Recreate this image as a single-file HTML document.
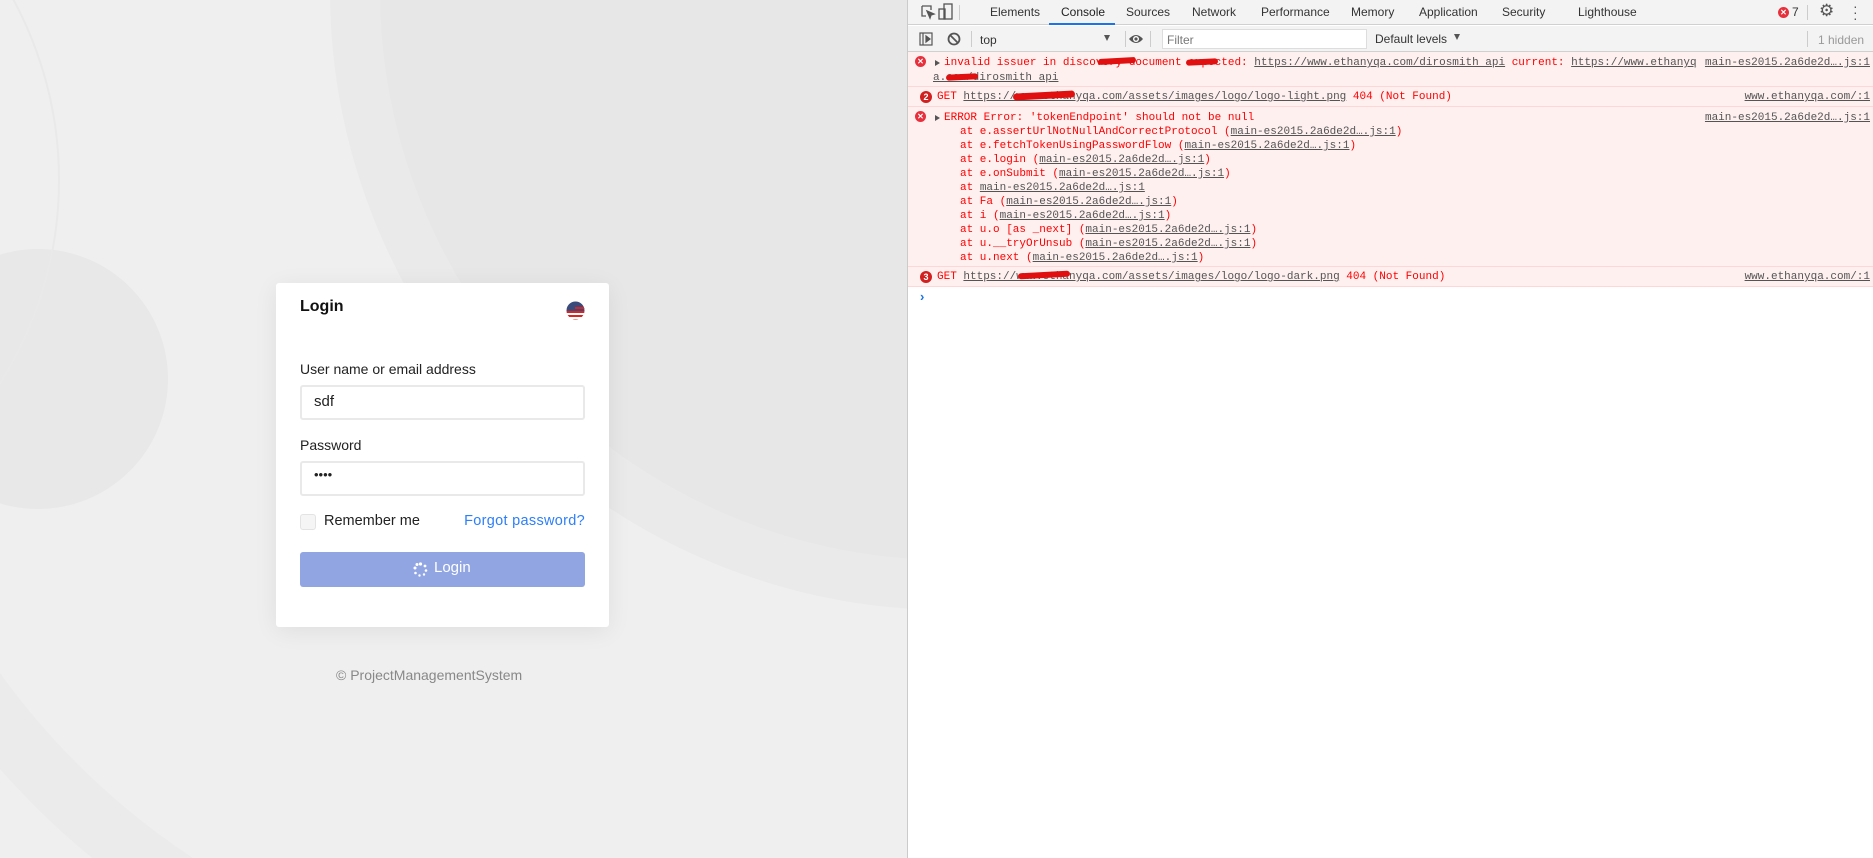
<!DOCTYPE html>
<html><head><meta charset="utf-8"><style>
*{margin:0;padding:0;box-sizing:border-box}
html,body{overflow:hidden}
body{width:1873px;height:858px;position:relative;background:#eeeeee;font-family:"Liberation Sans",sans-serif}
.abs{position:absolute}
#left{position:absolute;left:0;top:0;width:908px;height:858px;overflow:hidden;background:#efefef}
#dev{position:absolute;left:907px;top:0;width:966px;height:858px;background:#fff;border-left:1px solid #cbcbcb;overflow:hidden}
.tab{position:absolute;top:5px;font-size:12px;color:#333}
.mono{font-family:"Liberation Mono",monospace;font-size:11px;line-height:14px;color:#f00}
.mono .abs{white-space:pre}
.row{position:absolute;left:0;width:966px;background:#fff0f0;border-bottom:1px solid #ffd6d6;overflow:hidden}
.lnk{color:#545454;text-decoration:underline}
.rl{position:absolute;right:4px;color:#545454;text-decoration:underline}
.scr{position:absolute;height:6px;background:#e01010;border-radius:4px;transform:rotate(-3deg)}
.xi{position:absolute;width:11px;height:11px;border-radius:50%;background:#e8303c;color:#fff;font:bold 8px/11px "Liberation Sans",sans-serif;text-align:center}
.badge{position:absolute;width:12px;height:12px;border-radius:50%;background:#d12020;color:#fff;font:bold 9px/12px "Liberation Sans",sans-serif;text-align:center}
.tri{position:absolute;width:0;height:0;border-left:5px solid #555;border-top:3px solid transparent;border-bottom:3px solid transparent}
.field{position:absolute;left:300px;width:285px;height:35px;border:2px solid #e9e9e9;border-radius:3px;background:#fff}
.lbl{position:absolute;left:300px;font-size:14px;color:#222}
</style></head><body>
<div id="left">
  <div class="abs" style="left:-200px;top:-560px;width:1600px;height:1600px;border-radius:50%;border:60px solid #ebebeb"></div>
  <div class="abs" style="left:330px;top:-630px;width:1240px;height:1240px;border-radius:50%;border:50px solid #eaeaea;background:#e7e7e7"></div>
  <div class="abs" style="left:-92px;top:249px;width:260px;height:260px;border-radius:50%;background:#e8e8e8"></div>
  <div class="abs" style="left:-700px;top:-200px;width:760px;height:760px;border-radius:50%;border:2px solid #e9e9e9"></div>

  <div class="abs" style="left:276px;top:283px;width:333px;height:344px;background:#fff;border-radius:3px;box-shadow:0 4px 24px rgba(0,0,0,0.07)"></div>
  <div class="abs" style="left:300px;top:298px;font-size:16px;font-weight:bold;color:#111">Login</div>
  <svg class="abs" style="left:566px;top:301px" width="19" height="19" viewBox="0 0 19 19">
    <defs><clipPath id="c"><circle cx="9.5" cy="9.5" r="9"/></clipPath></defs>
    <g clip-path="url(#c)"><rect width="19" height="19" fill="#fff"/>
    <rect y="10" width="19" height="2" fill="#d22"/><rect y="14" width="19" height="2" fill="#d22"/><rect y="18" width="19" height="2" fill="#d22"/>
    <rect width="19" height="10" fill="#3a4a7a"/><rect y="6" x="9" width="10" height="2" fill="#d22"/></g></svg>
  <div class="lbl" style="top:361px">User name or email address</div>
  <div class="field" style="top:385px"></div>
  <div class="abs" style="left:314px;top:393px;font-size:15px;color:#222">sdf</div>
  <div class="lbl" style="top:437px">Password</div>
  <div class="field" style="top:461px"></div>
  <div class="abs" style="left:314px;top:467px;font-size:13px;color:#222">••••</div>
  <div class="abs" style="left:300px;top:514px;width:16px;height:16px;border:1.5px solid #e3e3e3;border-radius:3px;background:#f5f5f5"></div>
  <div class="abs" style="left:324px;top:513px;font-size:14.5px;color:#222">Remember me</div>
  <div class="abs" style="left:435px;width:150px;text-align:right;top:513px;font-size:14.5px;color:#2d7ff9;letter-spacing:0.3px">Forgot password?</div>
  <div class="abs" style="left:300px;top:552px;width:285px;height:35px;background:#91a5e3;border-radius:3px"></div>
  <svg class="abs" style="left:413px;top:562px" width="15" height="15" viewBox="0 0 15 15" fill="#fff"><circle cx="7.5" cy="2" r="1.6"/><circle cx="12" cy="4" r="1.4"/><circle cx="13" cy="8.5" r="1.3"/><circle cx="11" cy="12.5" r="1.2"/><circle cx="6.5" cy="13.5" r="1.2"/><circle cx="2.5" cy="11" r="1.3"/><circle cx="2" cy="6" r="1.5"/><circle cx="4" cy="2.5" r="1.5"/></svg>
  <div class="abs" style="left:434px;top:559px;font-size:15px;color:#fff">Login</div>
  <div class="abs" style="left:336px;top:667px;font-size:14px;color:#888">© ProjectManagementSystem</div>
</div>

<div id="dev">
  <div class="abs" style="left:0;top:0;width:966px;height:25px;background:#f3f3f3;border-bottom:1px solid #d0d0d0"></div>
  <svg class="abs" style="left:12px;top:4px" width="16" height="16" viewBox="0 0 16 16" fill="none" stroke="#555" stroke-width="1.3"><path d="M2 2h9v4M2 2v10h4"/><path d="M7 7l7 3-3 1-1 3z" fill="#555"/></svg>
  <svg class="abs" style="left:30px;top:3px" width="16" height="17" viewBox="0 0 16 17" fill="none" stroke="#555" stroke-width="1.3"><rect x="6" y="1" width="8" height="15"/><rect x="1" y="6" width="6" height="10"/></svg>
  <div class="abs" style="left:51px;top:5px;width:1px;height:15px;background:#ccc"></div>
  <div class="tab" style="left:82px">Elements</div>
  <div class="tab" style="left:153px;color:#222">Console</div>
  <div class="abs" style="left:141px;top:23px;width:66px;height:2px;background:#1a73e8"></div>
  <div class="tab" style="left:218px">Sources</div>
  <div class="tab" style="left:284px">Network</div>
  <div class="tab" style="left:353px">Performance</div>
  <div class="tab" style="left:443px">Memory</div>
  <div class="tab" style="left:511px">Application</div>
  <div class="tab" style="left:594px">Security</div>
  <div class="tab" style="left:670px">Lighthouse</div>
  <div class="xi" style="left:870px;top:7px">✕</div>
  <div class="tab" style="left:884px">7</div>
  <div class="abs" style="left:899px;top:5px;width:1px;height:15px;background:#ccc"></div>
  <div class="abs" style="left:911px;top:1px;font-size:17px;color:#555">⚙</div>
  <div class="abs" style="left:945px;top:3px;font-size:14px;color:#555;line-height:6px;width:4px">·<br>·<br>·</div>

  <div class="abs" style="left:0;top:26px;width:966px;height:26px;background:#f3f3f3;border-bottom:1px solid #d0d0d0"></div>
  <svg class="abs" style="left:11px;top:32px" width="14" height="14" viewBox="0 0 14 14" fill="none" stroke="#555" stroke-width="1.2"><rect x="1" y="1" width="12" height="12"/><path d="M4 1v12"/><path d="M7 4l4 3-4 3z" fill="#555"/></svg>
  <svg class="abs" style="left:39px;top:32px" width="14" height="14" viewBox="0 0 14 14" fill="none" stroke="#555" stroke-width="1.8"><circle cx="7" cy="7" r="5.5"/><path d="M3 3l8 8"/></svg>
  <div class="abs" style="left:63px;top:31px;width:1px;height:16px;background:#ccc"></div>
  <div class="abs" style="left:72px;top:33px;font-size:12px;color:#333">top</div>
  <div class="abs" style="left:196px;top:35px;border-top:6px solid #555;border-left:3.5px solid transparent;border-right:3.5px solid transparent"></div>
  <div class="abs" style="left:217px;top:31px;width:1px;height:16px;background:#ccc"></div>
  <svg class="abs" style="left:220px;top:32px" width="16" height="14" viewBox="0 0 16 14"><path d="M1 7Q8 -1 15 7Q8 15 1 7z" fill="#555"/><circle cx="8" cy="7" r="3" fill="#fff"/><circle cx="8" cy="7" r="1.6" fill="#555"/></svg>
  <div class="abs" style="left:242px;top:31px;width:1px;height:16px;background:#ccc"></div>
  <div class="abs" style="left:254px;top:29px;width:205px;height:20px;background:#fff;border:1px solid #ddd"></div>
  <div class="abs" style="left:259px;top:33px;font-size:12px;color:#777">Filter</div>
  <div class="abs" style="left:467px;top:32px;font-size:12px;color:#333">Default levels</div>
  <div class="abs" style="left:546px;top:34px;border-top:6px solid #555;border-left:3.5px solid transparent;border-right:3.5px solid transparent"></div>
  <div class="abs" style="left:899px;top:31px;width:1px;height:16px;background:#ccc"></div>
  <div class="abs" style="left:910px;top:33px;font-size:12px;color:#999">1 hidden</div>

  <div class="row mono" style="top:52px;height:35px">
    <div class="xi" style="left:7px;top:4px">✕</div><div class="tri" style="left:27px;top:8px"></div>
    <div class="abs" style="left:36px;top:4px">invalid issuer in discovery document expected: <span class="lnk">https://www.ethanyqa.com/dirosmith api</span> current: <span class="lnk">https://www.ethanyq</span></div>
    <div class="abs" style="left:25px;top:19px"><span class="lnk">a.com/dirosmith api</span></div>
    <div class="rl" style="top:4px">main-es2015.2a6de2d….js:1</div>
    <div class="scr" style="left:190px;top:6px;width:38px"></div>
    <div class="scr" style="left:278px;top:7px;width:32px"></div>
    <div class="scr" style="left:38px;top:22px;width:32px"></div>
  </div>
  <div class="row mono" style="top:87px;height:20px">
    <div class="badge" style="left:12px;top:4px">2</div>
    <div class="abs" style="left:29px;top:3px">GET <span class="lnk">https://www.ethanyqa.com/assets/images/logo/logo-light.png</span> 404 (Not Found)</div>
    <div class="rl" style="top:3px">www.ethanyqa.com/:1</div>
    <div class="scr" style="left:105px;top:5px;width:62px;height:7px"></div>
  </div>
  <div class="row mono" style="top:107px;height:160px">
    <div class="xi" style="left:7px;top:4px">✕</div><div class="tri" style="left:27px;top:8px"></div>
    <div class="abs" style="left:36px;top:4px">ERROR Error: 'tokenEndpoint' should not be null</div>
    <div class="rl" style="top:4px">main-es2015.2a6de2d….js:1</div>
    <div class="abs" style="left:52px;top:18px">at e.assertUrlNotNullAndCorrectProtocol (<span class="lnk">main-es2015.2a6de2d….js:1</span>)
at e.fetchTokenUsingPasswordFlow (<span class="lnk">main-es2015.2a6de2d….js:1</span>)
at e.login (<span class="lnk">main-es2015.2a6de2d….js:1</span>)
at e.onSubmit (<span class="lnk">main-es2015.2a6de2d….js:1</span>)
at <span class="lnk">main-es2015.2a6de2d….js:1</span>
at Fa (<span class="lnk">main-es2015.2a6de2d….js:1</span>)
at i (<span class="lnk">main-es2015.2a6de2d….js:1</span>)
at u.o [as _next] (<span class="lnk">main-es2015.2a6de2d….js:1</span>)
at u.__tryOrUnsub (<span class="lnk">main-es2015.2a6de2d….js:1</span>)
at u.next (<span class="lnk">main-es2015.2a6de2d….js:1</span>)</div>
  </div>
  <div class="row mono" style="top:267px;height:20px">
    <div class="badge" style="left:12px;top:4px">3</div>
    <div class="abs" style="left:29px;top:3px">GET <span class="lnk">https://www.ethanyqa.com/assets/images/logo/logo-dark.png</span> 404 (Not Found)</div>
    <div class="rl" style="top:3px">www.ethanyqa.com/:1</div>
    <div class="scr" style="left:110px;top:5px;width:52px;height:6px"></div>
  </div>
  <div class="abs" style="left:12px;top:289px;font-size:13px;color:#1a73e8;font-weight:bold">›</div>
</div>
</body></html>
